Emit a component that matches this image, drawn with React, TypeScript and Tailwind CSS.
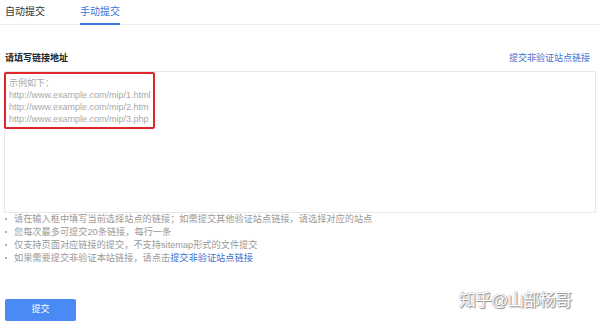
import React from "react";

const F = { fontFamily: '"Liberation Sans", Arial, "Noto Sans CJK SC", sans-serif' };

export default function App() {
  return (
    <div className="relative w-[600px] h-[324px] bg-white overflow-hidden text-[#333]" style={F}>
      {/* tabs */}
      <div className="flex items-end h-[25px] border-b border-[#eeeeee] pl-[5px]">
        <div className="text-[10px] leading-[12px] pb-[6px] text-[#333] w-[75px]">自动提交</div>
        <div className="text-[10px] leading-[12px] pb-[5px] text-[#3a76d8] border-b-[2px] border-[#3b78dc] -mb-px">手动提交</div>
      </div>

      {/* label row */}
      <div className="flex justify-between items-center px-[5px] mt-[27px] pr-[10px]">
        <div className="text-[9px] font-bold text-[#222]">请填写链接地址</div>
        <div className="text-[9px] text-[#3a6fd0]">提交非验证站点链接</div>
      </div>

      {/* textarea */}
      <div className="mx-[4px] mt-[5px] h-[142px] border border-[#e8e8e8]">
        <div className="w-[151px] h-[57px] border-[2px] border-[#e0262b] rounded-[2px] -ml-px px-[3px] pt-[3px] text-[9px] leading-[12px] text-[#a9a9a9]">
          <div>示例如下：</div>
          <div>http://www.example.com/mip/1.html</div>
          <div>http://www.example.com/mip/2.htm</div>
          <div>http://www.example.com/mip/3.php</div>
        </div>
      </div>

      {/* notes */}
      <ul className="mt-[0px] pl-[5px] text-[9.2px] leading-[13px] text-[#999]">
        {[
          "请在输入框中填写当前选择站点的链接；如需提交其他验证站点链接，请选择对应的站点",
          "您每次最多可提交20条链接，每行一条",
          "仅支持页面对应链接的提交，不支持sitemap形式的文件提交",
        ].map((t) => (
          <li key={t} className="flex items-center">
            <span className="w-[2px] h-[2px] bg-[#999] rounded-full mr-[7px]" />
            {t}
          </li>
        ))}
        <li className="flex items-center">
          <span className="w-[2px] h-[2px] bg-[#999] rounded-full mr-[7px]" />
          如果需要提交非验证本站链接，请点击<span className="text-[#3a6fd0]">提交非验证站点链接</span>
        </li>
      </ul>

      {/* button */}
      <div className="absolute left-[5px] top-[299px]">
        <div className="w-[71px] h-[22px] rounded-[2px] bg-[#4a8af4] text-white text-[9px] flex items-center justify-center">
          提交
        </div>
      </div>

      {/* watermark */}
      <div
        className="absolute left-[459px] top-[288px] text-[17px] text-white tracking-[-1px]"
        style={{ textShadow: "0 0 1px #777, 1px 1px 1px #888" }}
      >
        知乎@山部杨哥
      </div>
    </div>
  );
}
